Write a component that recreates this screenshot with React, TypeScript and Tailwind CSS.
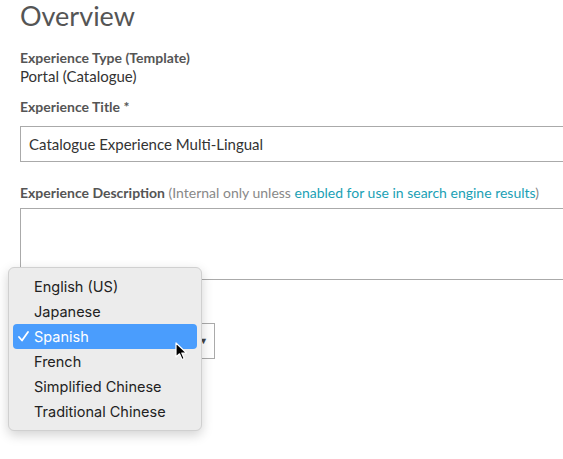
import React from "react";

export default function App() {
  const items = ["English (US)", "Japanese", "Spanish", "French", "Simplified Chinese", "Traditional Chinese"];
  return (
    <div className="relative w-[563px] h-[459px] overflow-hidden bg-white" style={{ fontFamily: "Lato, 'Noto Sans', sans-serif" }}>
      <div className="flex flex-col pl-[20px] w-[700px]">
        <h1 className="text-[27px] leading-[32px] text-[#555] font-normal">Overview</h1>
        <div className="mt-[17px] text-[14px] leading-[18px] font-bold text-[#555]">Experience Type (Template)</div>
        <div className="text-[15px] leading-[19px] text-[#333]">Portal (Catalogue)</div>
        <div className="mt-[12px] text-[14px] leading-[18px] font-bold text-[#555]">Experience Title *</div>
        <div className="mt-[10px] h-[36px] w-[640px] border border-[#aaa] flex items-center pl-[8px] text-[15px] text-[#333]">
          Catalogue Experience Multi-Lingual
        </div>
        <div className="mt-[22px] text-[14px] leading-[18px] text-[#555]">
          <span className="font-bold">Experience Description</span>{" "}
          <span className="text-[#888]">(Internal only unless </span>
          <span className="text-[#1a9fb5]">enabled for use in search engine results</span>
          <span className="text-[#888]">)</span>
        </div>
        <div className="mt-[6px] h-[72px] w-[640px] border border-[#aaa]" />
        <div className="mt-[43px] h-[36px] w-[195px] border border-[#aaa] flex items-center justify-end pr-[6px]">
          <span className="text-[9px] text-[#444]">▼</span>
        </div>
      </div>

      <div
        className="absolute left-[8px] top-[267px] w-[194px] rounded-[6px] bg-[#ececec] border border-[#d0d0d0] py-[6px] shadow-[0_4px_12px_rgba(0,0,0,0.18)]"
        style={{ fontFamily: "Inter, 'Noto Sans', sans-serif" }}
      >
        {items.map((it) => {
          const sel = it === "Spanish";
          return (
            <div
              key={it}
              className={
                "relative mx-[4px] h-[25px] rounded-[4px] flex items-center pl-[21px] text-[14.5px] " +
                (sel ? "bg-[#4a9dfd] text-white" : "text-[#222]")
              }
            >
              {sel && (
                <svg className="absolute left-[5px] top-[7px]" width="11" height="11" viewBox="0 0 11 11">
                  <path d="M1 6 L4 9.5 L10 1" fill="none" stroke="#fff" strokeWidth="1.8" strokeLinecap="round" strokeLinejoin="round" />
                </svg>
              )}
              {it}
            </div>
          );
        })}
      </div>

      <svg className="absolute left-[175px] top-[342px]" width="14" height="20" viewBox="0 0 14 20">
        <path d="M1 1 L1 15 L4.5 11.8 L7 17.5 L9.2 16.5 L6.8 11 L11.5 11 Z" fill="#000" stroke="#fff" strokeWidth="1.2" strokeLinejoin="round" />
      </svg>
    </div>
  );
}
